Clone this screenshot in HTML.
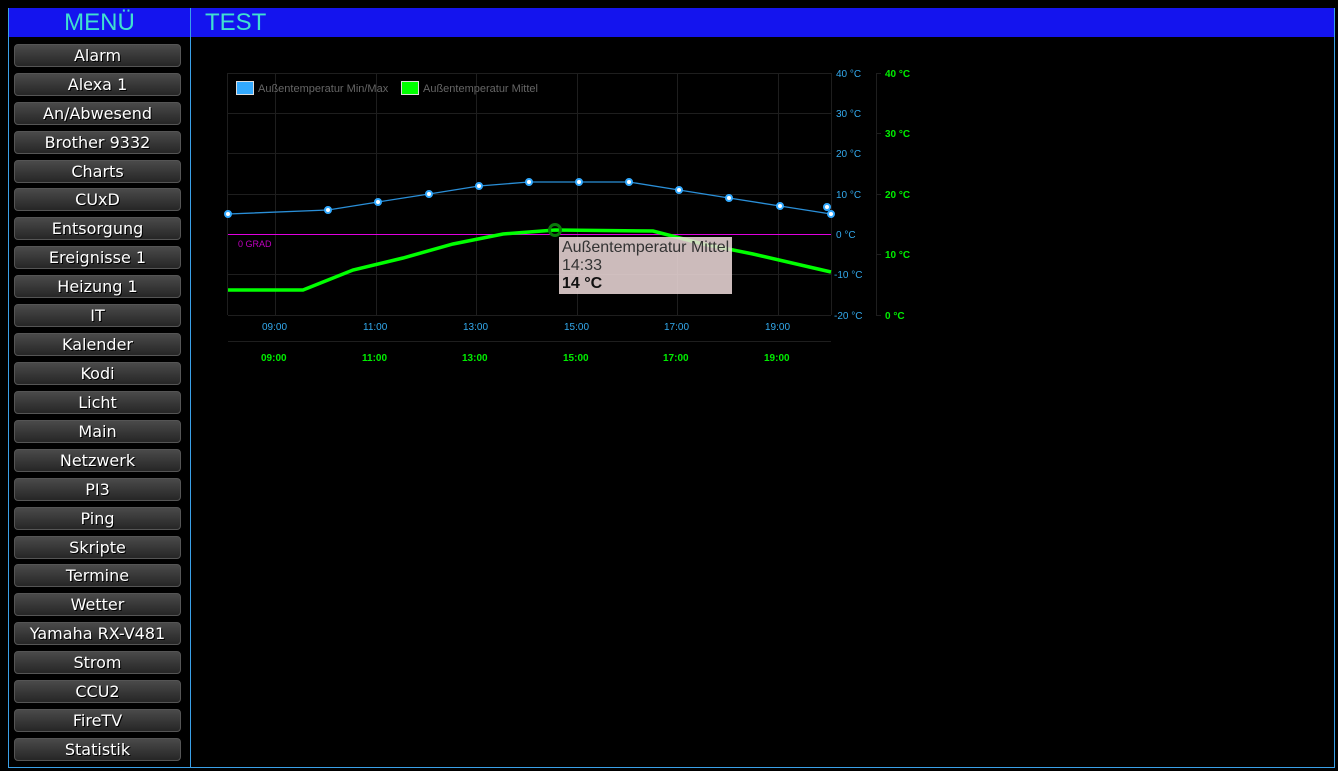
<!DOCTYPE html>
<html><head><meta charset="utf-8"><style>
body{margin:0;background:#000;width:1338px;height:771px;overflow:hidden;font-family:"Liberation Sans",sans-serif}
.frame{position:absolute;left:8px;top:8px;width:1327px;height:760px;border:1px solid #3aa0e8;box-sizing:border-box}
.hdr{position:absolute;top:8px;height:29px;background:#1414ee;color:#40e0d0;font-size:24px;line-height:29px}
.btn{position:absolute;left:14px;width:167px;height:23px;box-sizing:border-box;border:1px solid #555;border-radius:4px;background:linear-gradient(#4a4a4a,#262626);color:#fff;font-family:"DejaVu Sans",sans-serif;font-size:16px;line-height:22px;text-align:center;text-shadow:1px 1px 0 #000}
</style></head><body>
<div class="frame"></div>
<div class="hdr" style="left:9px;width:181px;text-align:center">MENÜ</div>
<div class="hdr" style="left:191px;width:1143px;padding-left:14px;box-sizing:border-box">TEST</div>
<div style="position:absolute;left:190px;top:8px;width:1px;height:760px;background:#3aa0e8"></div>
<div class="btn" style="top:44px">Alarm</div>
<div class="btn" style="top:73px">Alexa 1</div>
<div class="btn" style="top:102px">An/Abwesend</div>
<div class="btn" style="top:131px">Brother 9332</div>
<div class="btn" style="top:160px">Charts</div>
<div class="btn" style="top:188px">CUxD</div>
<div class="btn" style="top:217px">Entsorgung</div>
<div class="btn" style="top:246px">Ereignisse 1</div>
<div class="btn" style="top:275px">Heizung 1</div>
<div class="btn" style="top:304px">IT</div>
<div class="btn" style="top:333px">Kalender</div>
<div class="btn" style="top:362px">Kodi</div>
<div class="btn" style="top:391px">Licht</div>
<div class="btn" style="top:420px">Main</div>
<div class="btn" style="top:449px">Netzwerk</div>
<div class="btn" style="top:478px">PI3</div>
<div class="btn" style="top:507px">Ping</div>
<div class="btn" style="top:536px">Skripte</div>
<div class="btn" style="top:564px">Termine</div>
<div class="btn" style="top:593px">Wetter</div>
<div class="btn" style="top:622px">Yamaha RX-V481</div>
<div class="btn" style="top:651px">Strom</div>
<div class="btn" style="top:680px">CCU2</div>
<div class="btn" style="top:709px">FireTV</div>
<div class="btn" style="top:738px">Statistik</div>

<svg style="position:absolute;left:0;top:0" width="1338" height="771" font-family="Liberation Sans,sans-serif">
<g stroke="#1e1e1e" stroke-width="1">
<line x1="228" y1="73.5" x2="831" y2="73.5"/><line x1="228" y1="113.5" x2="831" y2="113.5"/>
<line x1="228" y1="153.5" x2="831" y2="153.5"/><line x1="228" y1="194.5" x2="831" y2="194.5"/>
<line x1="228" y1="274.5" x2="831" y2="274.5"/>
<line x1="275.5" y1="73" x2="275.5" y2="315"/><line x1="376.5" y1="73" x2="376.5" y2="315"/>
<line x1="476.5" y1="73" x2="476.5" y2="315"/><line x1="577.5" y1="73" x2="577.5" y2="315"/>
<line x1="677.5" y1="73" x2="677.5" y2="315"/><line x1="778.5" y1="73" x2="778.5" y2="315"/>
<line x1="227.5" y1="73" x2="227.5" y2="315"/><line x1="831.5" y1="73" x2="831.5" y2="315"/>
<line x1="228" y1="315.5" x2="831" y2="315.5"/><line x1="228" y1="341.5" x2="831" y2="341.5"/>
<line x1="876.5" y1="73" x2="876.5" y2="315"/>
<line x1="876" y1="73.5" x2="881" y2="73.5"/><line x1="876" y1="133.5" x2="881" y2="133.5"/>
<line x1="876" y1="194.5" x2="881" y2="194.5"/><line x1="876" y1="254.5" x2="881" y2="254.5"/><line x1="876" y1="315.5" x2="881" y2="315.5"/>
</g>
<line x1="228" y1="234.5" x2="831" y2="234.5" stroke="#e000e0" stroke-width="1"/>
<text x="238" y="247" fill="#c000c0" font-size="9">0 GRAD</text>
<rect x="236.5" y="81.5" width="17" height="13" fill="#33aaff" stroke="#ddd"/>
<text x="258" y="92" fill="#666" font-size="11">Außentemperatur Min/Max</text>
<rect x="401.5" y="81.5" width="17" height="13" fill="#00ff00" stroke="#ddd"/>
<text x="423" y="92" fill="#666" font-size="11">Außentemperatur Mittel</text>
<polyline fill="none" stroke="#2a8fd8" stroke-width="1.3" points="228,214 328,210 378,202 429,194 479,186 529,182 579,182 629,182 679,190 729,198 780,206 831,214"/>
<g fill="#fff" stroke="#33aaff" stroke-width="2">
<circle cx="228" cy="214" r="3"/><circle cx="328" cy="210" r="3"/><circle cx="378" cy="202" r="3"/><circle cx="429" cy="194" r="3"/><circle cx="479" cy="186" r="3"/><circle cx="529" cy="182" r="3"/><circle cx="579" cy="182" r="3"/><circle cx="629" cy="182" r="3"/><circle cx="679" cy="190" r="3"/><circle cx="729" cy="198" r="3"/><circle cx="780" cy="206" r="3"/><circle cx="827" cy="207" r="3"/><circle cx="831" cy="214" r="3"/>
</g>
<polyline fill="none" stroke="#00ff00" stroke-width="3.5" points="228,290 303,290 353,270 403,258 453,244 503,234 555,230 653,231 703,244 753,254 831,272"/>
<circle cx="555" cy="230" r="5.5" fill="none" stroke="#0a7a0a" stroke-width="3"/>
<rect x="559" y="237" width="173" height="57" fill="#f0dcdc" fill-opacity="0.85"/>
<text x="562" y="252" fill="#333" font-size="16">Außentemperatur Mittel</text>
<text x="562" y="270" fill="#333" font-size="16">14:33</text>
<text x="562" y="288" fill="#111" font-size="16" font-weight="bold">14 °C</text>
<g fill="#33aaee" font-size="10">
<text x="836" y="77">40 °C</text><text x="836" y="117">30 °C</text><text x="836" y="157">20 °C</text><text x="836" y="198">10 °C</text><text x="836" y="238">0 °C</text><text x="834" y="278">-10 °C</text><text x="834" y="319">-20 °C</text>
<text x="262" y="330">09:00</text><text x="363" y="330">11:00</text><text x="463" y="330">13:00</text><text x="564" y="330">15:00</text><text x="664" y="330">17:00</text><text x="765" y="330">19:00</text>
</g>
<g fill="#00ee00" font-size="10" font-weight="bold">
<text x="885" y="77">40 °C</text><text x="885" y="137">30 °C</text><text x="885" y="198">20 °C</text><text x="885" y="258">10 °C</text><text x="885" y="319">0 °C</text>
<text x="261" y="361">09:00</text><text x="362" y="361">11:00</text><text x="462" y="361">13:00</text><text x="563" y="361">15:00</text><text x="663" y="361">17:00</text><text x="764" y="361">19:00</text>
</g>
</svg>
</body></html>
